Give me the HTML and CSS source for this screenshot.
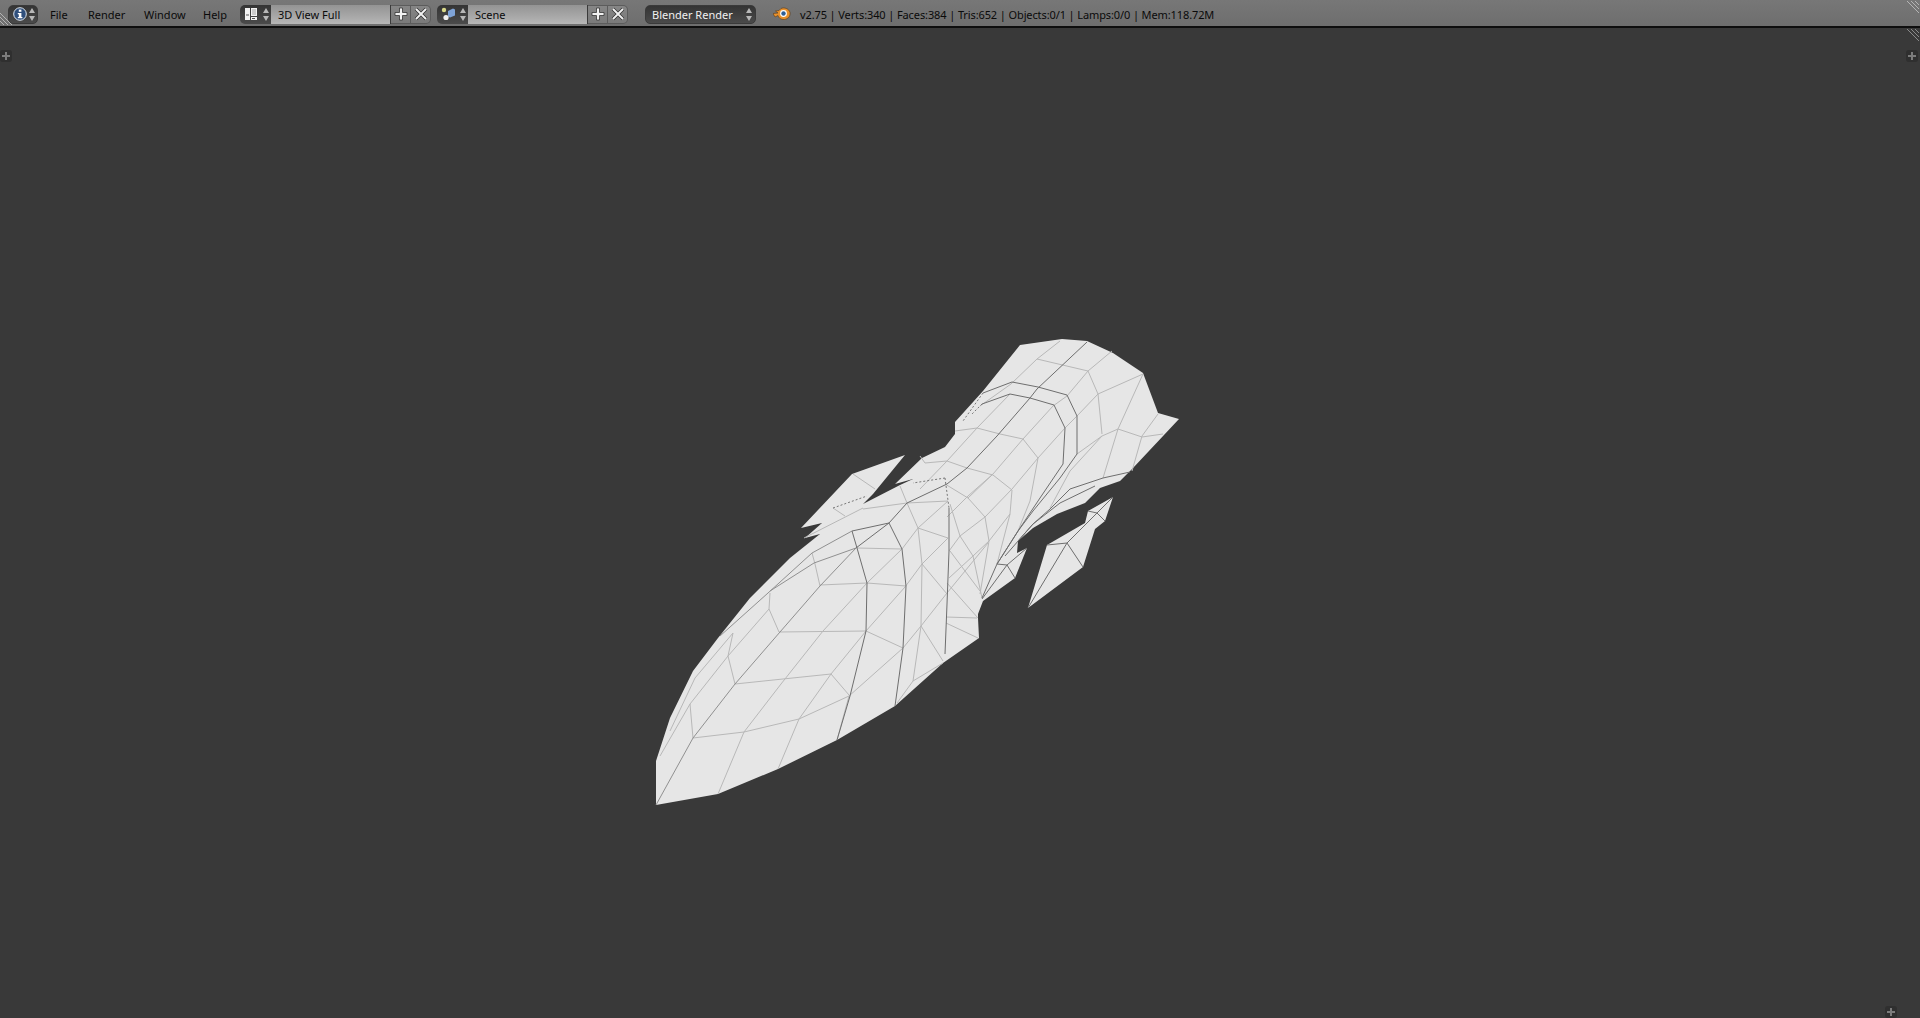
FILE: index.html
```html
<!DOCTYPE html>
<html lang="en">
<head>
    <meta charset="UTF-8">
    <title>Blender</title>
    <link rel="stylesheet" href="styles.css">
</head>
<body>
    <header class="topbar">
        <svg class="hatch hatch-left" width="14" height="14" viewBox="0 0 14 14"><path d="M0 1L12 13M0 5L8 13M0 9L4 13"/></svg>

        <div class="dropdown dropdown-editor">
            <svg width="14" height="14" viewBox="0 0 14 14">
                <circle cx="7" cy="7" r="6.3" fill="#2f4f7c" stroke="#dfe6ee" stroke-width="1"/>
                <rect x="5.8" y="2.6" width="2.6" height="2.2" fill="#fff"/>
                <path d="M4.8 6h3.6v4h1v1.3H4.8V10h1V7.3h-1z" fill="#fff"/>
            </svg>
            <span class="updown"></span>
        </div>

        <nav class="menu">
            <a class="menu-file">File</a>
            <a class="menu-render">Render</a>
            <a class="menu-window">Window</a>
            <a class="menu-help">Help</a>
        </nav>

        <div class="datablock">
            <div class="block-icon">
                <svg width="14" height="14" viewBox="0 0 14 14">
                    <path d="M1 1h5v12H1zM7 1h6v8H7zM7 10h6v3H7z" fill="#f2f2f2"/>
                    <path d="M2 8h3M8 11.5h3" stroke="#555" stroke-width="1"/>
                    <path d="M8 2h4v6H8z" fill="#ccc"/>
                </svg>
                <span class="updown"></span>
            </div>
            <div class="block-name">3D View Full</div>
            <div class="block-btn">
                <svg width="14" height="14" viewBox="0 0 14 14"><path d="M5.5 1h3v4.5H13v3H8.500V13h-3V8.500H1v-3h4.500z" fill="#f2f2f2" stroke="#333" stroke-width=".8"/></svg>
            </div>
            <div class="block-btn block-btn-last">
                <svg width="14" height="14" viewBox="0 0 14 14"><path d="M2 2l10 10M12 2L2 12" stroke="#333" stroke-width="3.4"/><path d="M2 2l10 10M12 2L2 12" stroke="#f2f2f2" stroke-width="1.9"/></svg>
            </div>
        </div>

        <div class="datablock datablock-scene">
            <div class="block-icon">
                <svg width="16" height="14" viewBox="0 0 16 14">
                    <circle cx="3" cy="3" r="2.2" fill="#d9d98a"/>
                    <path d="M7 4l5-2.5 2 1v6l-5 2-2-1z" fill="#7fa4d8"/>
                    <circle cx="5" cy="10.5" r="2.6" fill="#f0f0f0"/>
                </svg>
                <span class="updown"></span>
            </div>
            <div class="block-name">Scene</div>
            <div class="block-btn">
                <svg width="14" height="14" viewBox="0 0 14 14"><path d="M5.500 1h3v4.500H13v3H8.500V13h-3V8.500H1v-3h4.500z" fill="#f2f2f2" stroke="#333" stroke-width=".8"/></svg>
            </div>
            <div class="block-btn block-btn-last">
                <svg width="14" height="14" viewBox="0 0 14 14"><path d="M2 2l10 10M12 2L2 12" stroke="#333" stroke-width="3.4"/><path d="M2 2l10 10M12 2L2 12" stroke="#f2f2f2" stroke-width="1.9"/></svg>
            </div>
        </div>

        <div class="dropdown dropdown-engine">
            <span>Blender Render</span>
            <span class="updown"></span>
        </div>

        <svg class="blender-logo" width="18" height="14" viewBox="0 0 18 14">
            <path d="M0 6.500l5-.5L2.500 4 6 3.500 8 1.500c3-1.500 8 0 9 4 .8 4-3 7.500-7 7-3-.3-4.500-2-5-4l-3 1.500z" fill="#e8912c" stroke="#5a3a18" stroke-width=".6"/>
            <circle cx="10.500" cy="6.500" r="3.400" fill="#fff"/>
            <circle cx="10.500" cy="6.500" r="2.200" fill="#2f5f96"/>
        </svg>
        <div class="stats">v2.75 | Verts:340 | Faces:384 | Tris:652 | Objects:0/1 | Lamps:0/0 | Mem:118.72M</div>

        <svg class="hatch hatch-right" width="14" height="14" viewBox="0 0 14 14"><path d="M2 1L14 13M6 1L14 9M10 1L14 5"/></svg>
    </header>

    <main class="viewport">
        <svg class="hatch hatch-view" width="14" height="14" viewBox="0 0 14 14"><path d="M2 1L14 13M6 1L14 9M10 1L14 5"/></svg>
        <span class="corner corner-tl"></span>
        <span class="corner corner-tr"></span>
        <span class="corner corner-br"></span>

        <svg class="scene" viewBox="0 27 1920 991" preserveAspectRatio="none">
            <!-- silhouettes -->
            <polygon class="mesh" points="656,804 656,760 670,717 693,670 718,637 750,597 790,557 820,533 805,537 822,522 801,527 852,473 905,454 873,493 863,503 900,484 913,478 895,483 922,457 945,446 955,433 955,421 983,390 1020,344 1062,338 1087,340 1113,352 1143,372 1158,412 1179,418 1133,467 1120,480 1100,487 1085,502 1057,513 1033,527 1018,540 1017,552 1027,547 1015,577 983,600 978,613 978,617 979,637 943,662 895,705 837,739 778,768 718,793"/>
            <polygon class="mesh" points="1113,496 1088,510 1085,522 1047,544 1028,607 1083,566 1095,528 1105,520"/>

            <!-- soft edges -->
            <g class="edge-light">
                <polyline points="1060,340 1037,358 1011,383 980,405"/>
                <polyline points="1037,358 1088,370 1098,393 1102,433"/>
                <polyline points="1112,350 1088,370 1067,395 1053,405 1023,438 993,473 968,495 947,516"/>
                <polyline points="1143,373 1098,393 1077,415 1065,427 1038,457 1012,488 985,516 960,535 949,550"/>
                <polyline points="1143,373 1118,428 1103,477"/>
                <polyline points="1158,413 1142,435 1132,470"/>
                <polyline points="1118,428 1142,436 1163,433"/>
                <polyline points="1118,428 1102,435 1077,453"/>
                <polyline points="1102,435 1070,470 1050,507"/>
                <polyline points="955,430 977,427 1000,433 1023,438 1038,457 1030,500 1018,530"/>
                <polyline points="1010,393 977,427 947,460 920,488"/>
                <polyline points="920,455 925,462 947,460 967,467 993,474 1012,489 1010,513 997,563"/>
                <polyline points="945,483 968,497 985,516 989,540 980,593"/>
                <polyline points="968,497 993,473"/>
                <polyline points="950,503 960,535 973,555 982,597"/>
                <polyline points="973,555 989,540 1010,513"/>
                <polyline points="949,577 973,555"/>
                <polyline points="950,550 980,590"/>
                <polyline points="947,582 978,617"/>
                <polyline points="988,542 947,592 921,625 903,647 849,695 837,739"/>
                <polyline points="948,500 907,502"/>
                <polyline points="948,537 918,527 907,502 900,485"/>
                <polyline points="918,527 922,563 921,625 913,680"/>
                <polyline points="921,625 943,660"/>
                <polyline points="922,563 947,593"/>
                <polyline points="948,500 918,527 902,548 867,582 823,630 781,683 744,731 718,793"/>
                <polyline points="948,537 922,563 905,586 866,630 831,673 799,718 778,768"/>
                <polyline points="946,616 977,617"/>
                <polyline points="946,622 978,637"/>
                <polyline points="943,662 913,680 897,702"/>
                <polyline points="866,630 903,647"/>
                <polyline points="831,673 849,694"/>
                <polyline points="735,683 831,673"/>
                <polyline points="849,695 799,718 744,731 693,737 690,703"/>
                <polyline points="820,584 867,582 906,585"/>
                <polyline points="857,547 902,548"/>
                <polyline points="812,552 815,563 820,585"/>
                <polyline points="770,592 769,608 779,631 866,630"/>
                <polyline points="769,608 728,655 735,683"/>
                <polyline points="733,632 728,655 690,703 660,755"/>
                <polyline points="733,632 695,677 670,730"/>
                <polyline points="863,508 907,502"/>
                <polyline points="804,537 863,507"/>
                <polyline points="853,473 875,488"/>
                <polyline points="833,507 845,515"/>
            </g>

            <!-- in-between edges on the nose -->
            <g class="edge-mid">
                <polyline points="856,547 820,585 780,631 735,683 693,737 656,804"/>
                <polyline points="852,530 812,552 768,592 720,635"/>
                <polyline points="856,547 814,562 770,590"/>
            </g>

            <!-- sharp edges and seams -->
            <g class="edge-dark">
                <polyline points="1087,341 1037,388 1030,397 997,435 967,467 947,483 907,502 889,522 856,547"/>
                <polyline points="983,392 1012,381 1038,386 1067,394 1077,415 1077,453 1060,477 1033,510 1018,530 997,563 982,597"/>
                <polyline points="982,403 1010,393 1030,397 1054,404 1065,427 1063,463 1040,497 1020,527 997,563"/>
                <polyline points="889,522 902,548 906,585 903,647 895,705"/>
                <polyline points="852,530 857,547 867,582 866,630 850,695 837,739"/>
                <polyline points="889,522 852,530"/>
                <polyline points="1130,471 1103,477 1070,488 1050,508 1033,523 1018,540"/>
                <polyline points="1095,485 1060,502 1033,523 1005,555"/>
                <polyline points="997,563 1007,564 1015,577"/>
                <polyline points="1007,564 982,598"/>
                <polyline points="1027,547 1007,564"/>
                <polyline points="1047,544 1067,542 1083,566"/>
                <polyline points="1067,542 1028,607"/>
                <polyline points="1067,542 1097,512 1105,520"/>
                <polyline points="1088,510 1097,512 1113,496"/>
                <polyline points="949,507 949,550 947,603 945,653"/>
            </g>

            <g class="edge-dash">
                <polyline points="983,392 963,420"/>
                <polyline points="982,403 972,413"/>
                <polyline points="945,477 913,482"/>
                <polyline points="945,477 949,507"/>
                <polyline points="833,507 867,495"/>
            </g>
        </svg>
    </main>
</body>
</html>
```

FILE: styles.css
```css
* {
    margin: 0;
    padding: 0;
    box-sizing: border-box;
}

html, body {
    height: 100%;
    overflow: hidden;
}

body {
    display: flex;
    flex-direction: column;
    background-color: #393939;
    font-family: "Noto Sans", "DejaVu Sans", sans-serif;
    font-size: 11px;
}

.topbar {
    position: relative;
    display: flex;
    align-items: center;
    flex: none;
    height: 28px;
    padding: 2px 0 0 8px;
    background: linear-gradient(#777, #6e6e6e);
    border-bottom: 2px solid #0e0e0e;
    color: #0a0a0a;
}

.hatch {
    position: absolute;
    fill: none;
    stroke: #b4b4b4;
    stroke-width: 1;
}

.hatch-left {
    left: 0;
    top: 12px;
}

.hatch-right {
    right: 1px;
    top: 0;
}

.hatch-view {
    right: 1px;
    top: 0;
    stroke: #8a8a8a;
}

.dropdown {
    display: flex;
    align-items: center;
    height: 19px;
    background: linear-gradient(#343434, #4a4a4a);
    border: 1px solid #3a3a3a;
    border-radius: 5px;
    color: #f0f0f0;
}

.dropdown-editor {
    width: 30px;
    padding-left: 4px;
}

.dropdown-engine {
    justify-content: space-between;
    width: 111px;
    margin-left: 17px;
    padding: 0 1px 0 6px;
}

.updown {
    position: relative;
    display: block;
    width: 7px;
    height: 13px;
    margin-left: auto;
    margin-right: 1px;
}

.updown::before,
.updown::after {
    content: "";
    position: absolute;
    left: 0;
    border-left: 3.5px solid transparent;
    border-right: 3.5px solid transparent;
}

.updown::before {
    top: 0;
    border-bottom: 5px solid #b8b8b8;
}

.updown::after {
    bottom: 0;
    border-top: 5px solid #b8b8b8;
}

.menu {
    display: flex;
    margin-left: 12px;
}

.menu a {
    display: block;
}

.menu-file {
    width: 38px;
}

.menu-render {
    width: 56px;
}

.menu-window {
    width: 59px;
}

.menu-help {
    width: 37px;
}

.datablock {
    display: flex;
    height: 19px;
    width: 191px;
}

.datablock-scene {
    margin-left: 6px;
}

.block-icon {
    display: flex;
    align-items: center;
    width: 31px;
    padding-left: 4px;
    background: linear-gradient(#343434, #4a4a4a);
    border-radius: 5px 0 0 5px;
}

.block-name {
    display: flex;
    align-items: center;
    width: 120px;
    padding-left: 7px;
    background: linear-gradient(#939393, #b6b6b6);
    border-right: 1px solid #3a3a3a;
}

.block-btn {
    display: flex;
    align-items: center;
    justify-content: center;
    width: 20px;
    background: linear-gradient(#868686, #7a7a7a);
    border-top: 1px solid #5c5c5c;
    border-bottom: 1px solid #5c5c5c;
    border-right: 1px solid #5c5c5c;
}

.block-btn-last {
    border-radius: 0 5px 5px 0;
}

.blender-logo {
    margin-left: 17px;
    flex: none;
}

.stats {
    margin-left: 9px;
    letter-spacing: -0.11px;
    white-space: nowrap;
}

.viewport {
    position: relative;
    flex: 1;
    background-color: #393939;
    overflow: hidden;
}

.scene {
    display: block;
    width: 1920px;
    height: 991px;
}

.mesh {
    fill: #e6e6e6;
}

.edge-light polyline,
.edge-mid polyline,
.edge-dark polyline,
.edge-dash polyline {
    fill: none;
    stroke-linejoin: round;
    stroke-width: 1;
}

.edge-light polyline {
    stroke: #b8b8b8;
}

.edge-mid polyline {
    stroke: #909090;
}

.edge-dark polyline {
    stroke: #6e6e6e;
}

.edge-dash polyline {
    stroke: #777;
    stroke-dasharray: 2 2;
}

.corner {
    position: absolute;
    width: 12px;
    height: 12px;
    border-radius: 3px;
    background-color: #2f2f2f;
}

.corner::before,
.corner::after {
    content: "";
    position: absolute;
    background-color: #7c7c7c;
}

.corner::before {
    left: 2px;
    top: 5px;
    width: 8px;
    height: 2px;
}

.corner::after {
    left: 5px;
    top: 2px;
    width: 2px;
    height: 8px;
}

.corner-tl {
    left: 0;
    top: 22px;
}

.corner-tr {
    right: 2px;
    top: 22px;
}

.corner-br {
    right: 23px;
    bottom: 0;
}
```
